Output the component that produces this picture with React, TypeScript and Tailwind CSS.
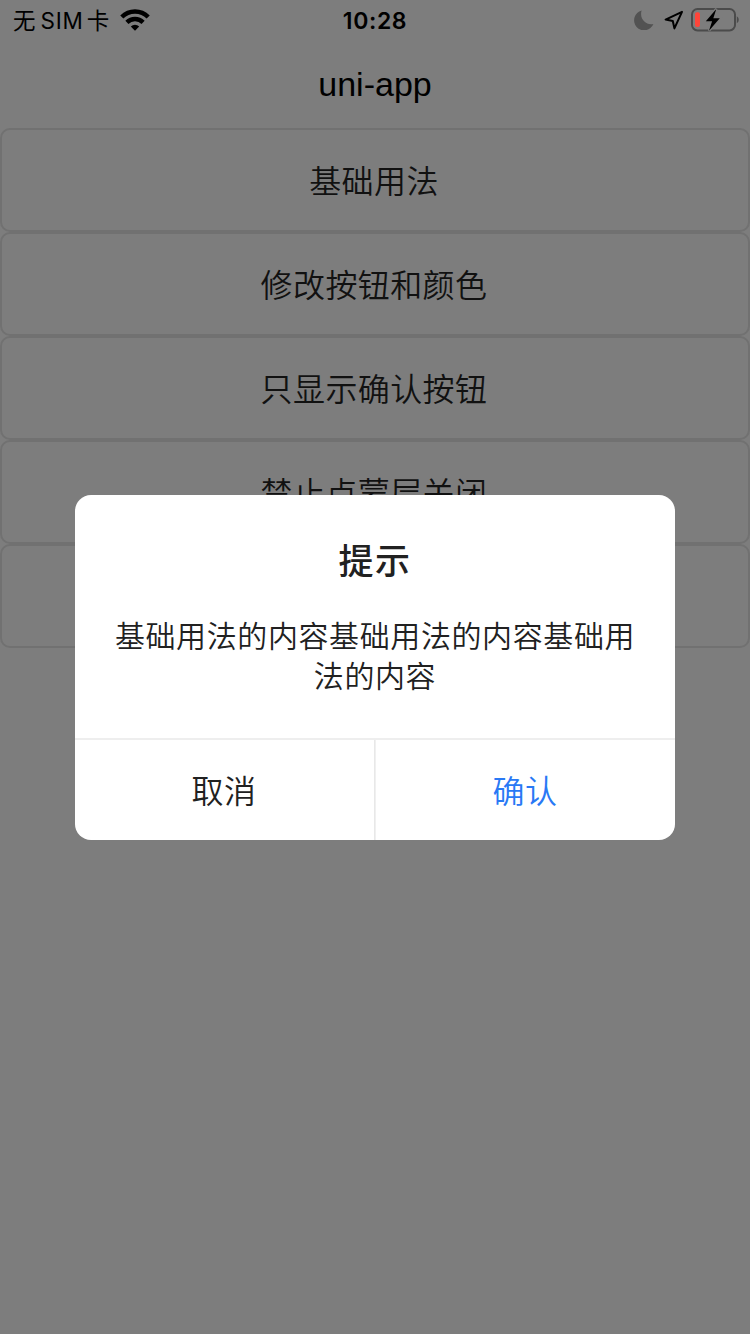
const actions = ["基础用法", "修改按钮和颜色", "只显示确认按钮", "禁止点蒙层关闭", ""];

function WifiIcon() {
  return (
    <svg width="30" height="22" viewBox="0 0 30 22" fill="none" stroke="currentColor" strokeWidth="4.4">
      <path d="M1.8 8a18.6 18.6 0 0 1 26.4 0" />
      <path d="M6.9 13.4a11.5 11.5 0 0 1 16.2 0" />
      <path d="M15 21.7l-4.2-4.3a6 6 0 0 1 8.4 0z" fill="currentColor" stroke="none" />
    </svg>
  );
}

function MoonIcon() {
  return (
    <svg width="20" height="20" viewBox="0 0 20 20" fill="currentColor">
      <path d="M7.6.6A10 10 0 1 0 19.4 14C12.6 15.8 5 9.4 7.6.6z" />
    </svg>
  );
}

function LocationIcon() {
  return (
    <svg width="20" height="20" viewBox="0 0 20 20" fill="none" stroke="currentColor" strokeWidth="2" strokeLinejoin="round">
      <path d="M18 1.8L1.6 9.6l7.2 1.4 1.6 7.4z" />
    </svg>
  );
}

function BatteryIcon() {
  return (
    <svg width="49" height="24" viewBox="0 0 49 24">
      <rect x="1" y="1" width="43" height="21.4" rx="5.5" fill="none" stroke="#4b4b4b" strokeWidth="2" />
      <path d="M45.8 8.3c2.6 1.4 2.6 5.6 0 7z" fill="#4b4b4b" />
      <rect x="4" y="4.2" width="5" height="14.8" rx="2" fill="#ff453a" />
      <path
        d="M25.3.9L14.8 13.2h6.3L18 22.7l10.8-12.5h-6.5z"
        fill="#000"
        stroke="#7d7d7d"
        strokeWidth="2.4"
        paintOrder="stroke"
      />
    </svg>
  );
}

function StatusBar() {
  return (
    <div className="grid h-10 grid-cols-3 items-center text-black">
      <div className="flex items-center pl-[13px]">
        <span className="pt-0.5 font-['Inter','Noto_Sans_CJK_SC',sans-serif] text-[22.5px] leading-[38px] whitespace-pre">
          无<span className="ml-[5px] tracking-[0.8px]">SIM</span>
          <span className="ml-[3px]">卡</span>
        </span>
        <span className="ml-[11px]">
          <WifiIcon />
        </span>
      </div>
      <span className="pt-0.5 text-center font-['Inter','Liberation_Sans',sans-serif] text-[23px] leading-[38px] font-semibold tracking-[0.6px]">
        10:28
      </span>
      <div className="flex items-center justify-end pr-2.5">
        <span className="mr-2.5 text-[#525252]">
          <MoonIcon />
        </span>
        <span className="mr-[7px]">
          <LocationIcon />
        </span>
        <BatteryIcon />
      </div>
    </div>
  );
}

function Modal() {
  return (
    <div className="w-[600px] overflow-hidden rounded-2xl bg-white text-[#212121]">
      <h2 className="pt-[42px] text-center text-[35px] leading-[50px] font-medium tracking-[1.4px]">提示</h2>
      <p className="mt-[30px] h-[121px] px-9 text-center text-[30px] leading-10 font-[350] tracking-[0.6px]">
        基础用法的内容基础用法的内容基础用
        <br />
        法的内容
      </p>
      <div className="grid h-[102px] grid-cols-2 border-t-2 border-[#eeeeee] text-[32px] font-[350] tracking-[0.4px]">
        <button type="button" className="border-r border-[#e8e8e8] pt-1 pr-px">
          取消
        </button>
        <button type="button" className="border-l border-[#f0f0f0] pt-1 pr-px text-[#2979f5]">
          确认
        </button>
      </div>
    </div>
  );
}

export default function App() {
  return (
    <div className="relative h-[1334px] w-[750px] overflow-hidden bg-[#7d7d7d] font-['Liberation_Sans','Noto_Sans_CJK_SC',sans-serif]">
      <StatusBar />
      <h1 className="h-[88px] text-center text-[34px] leading-[88px] text-black">uni-app</h1>
      <div className="flex flex-col">
        {actions.map((label, i) => (
          <button
            key={i}
            type="button"
            className="h-[104px] rounded-[10px] border-2 border-[#717171] pt-[3px] pr-0.5 text-[32px] font-[350] tracking-[0.4px] text-[#111111]"
          >
            {label}
          </button>
        ))}
      </div>
      <div className="absolute inset-0 flex items-center justify-center">
        <Modal />
      </div>
    </div>
  );
}
